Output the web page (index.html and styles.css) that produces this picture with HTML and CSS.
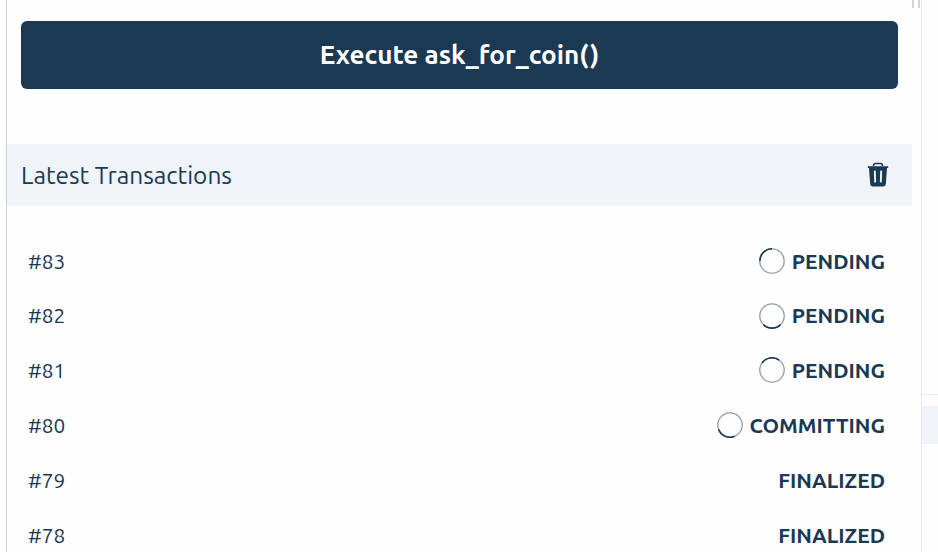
FILE: index.html
```html
<!DOCTYPE html>
<html lang="en">
<head>
<meta charset="utf-8">
<title>Transactions</title>
<link rel="stylesheet" href="styles.css">
</head>
<body>
<div class="layout">
  <main class="panel">
    <button class="execute"><span>Execute ask_for_coin()</span></button>
    <header class="section-header">
      <h2>Latest Transactions</h2>
      <svg class="trash" viewBox="0 0 22 26" aria-label="Clear">
        <path d="M6.500 5V4.700Q6.500 2.500 8.700 2.500h4.600Q15.500 2.500 15.500 4.700V5" fill="none" stroke="currentColor" stroke-width="1.600"/>
        <path fill="currentColor" d="M.8 5.300h20.400v1.800h-1.200l-1.100 15.100Q18.700 25.400 16 25.400H6Q3.300 25.400 3.100 22.200L2 7.100H.8z"/>
        <path d="M7.800 9.600l.4 11.800M14.200 9.600l-.4 11.800" fill="none" stroke="#f0f3f8" stroke-width="1.900"/>
      </svg>
    </header>
    <ul class="transactions">
      <li><span class="id">#83</span><svg class="spinner" viewBox="0 0 26 26"><circle cx="13" cy="13" r="12.200"/><path d="M.8 13A12.200 12.200 0 0 1 13 .8"/></svg><strong>PENDING</strong></li>
      <li><span class="id">#82</span><svg class="spinner low" viewBox="0 0 26 26"><circle cx="13" cy="13" r="12.200"/><path d="M21.600 21.600A12.200 12.200 0 0 1 4.400 21.600"/></svg><strong>PENDING</strong></li>
      <li><span class="id">#81</span><svg class="spinner" viewBox="0 0 26 26"><circle cx="13" cy="13" r="12.200"/><path d="M3 6A12.200 12.200 0 0 1 20 3"/></svg><strong>PENDING</strong></li>
      <li><span class="id">#80</span><svg class="spinner" viewBox="0 0 26 26"><circle cx="13" cy="13" r="12.200"/><path d="M17.600 24.300A12.200 12.200 0 0 1 1.700 17.600"/></svg><strong>COMMITTING</strong></li>
      <li><span class="id">#79</span><strong>FINALIZED</strong></li>
      <li><span class="id">#78</span><strong>FINALIZED</strong></li>
    </ul>
  </main>
  <div class="splitter"><i></i><i></i></div>
  <aside class="side"><div class="side-row"></div></aside>
</div>
</body>
</html>
```
FILE: styles.css
```css
* { box-sizing: border-box; }
body {
  margin: 0;
  overflow: hidden;
  background: #fefefe;
  color: #1b3952;
  font-family: Ubuntu, "Noto Sans", sans-serif;
}
.layout {
  display: grid;
  grid-template-columns: 906px 9px 17px;
  height: 552px;
  padding-left: 6px;
}
.panel {
  height: 552px;
  overflow: hidden;
  border-left: 1px solid #c8d1e2;
}
.execute {
  display: flex;
  align-items: center;
  justify-content: center;
  width: 877px;
  height: 68px;
  margin: 21px 0 55px 14px;
  padding: 0;
  border: 0;
  border-radius: 6px;
  background: #1b3952;
  color: #fff;
  font: 700 26.100px/32px Ubuntu, "Noto Sans", sans-serif;
}
.section-header {
  display: flex;
  align-items: center;
  justify-content: space-between;
  height: 62px;
  padding: 0 23.500px 0 14px;
  background: #f0f3f8;
}
.section-header h2 {
  margin: 0;
  font-size: 24.400px;
  font-weight: 400;
  line-height: 32px;
}
.trash {
  width: 22px;
  height: 26px;
  margin-top: -2px;
}
.transactions {
  margin: 0;
  padding: 29px 27px 0 21px;
  list-style: none;
}
.transactions li {
  display: flex;
  align-items: center;
  height: 55px;
  padding-bottom: 1px;
  font-size: 20.800px;
  line-height: 26px;
}
.transactions li:first-child {
  height: 54px;
  padding-bottom: 0;
}
.transactions strong {
  margin-bottom: 2px;
  font-size: 21px;
}
.id { margin-right: auto; }
.spinner {
  width: 26px;
  height: 26px;
  margin: -2px 7px 0 0;
  fill: none;
  stroke: #8e9ba9;
  stroke-width: 1.300;
}
.spinner.low { margin-top: 0; }
.spinner path {
  stroke: #1b3952;
  stroke-width: 1.600;
}
.splitter {
  display: flex;
  justify-content: space-between;
  padding-right: 1px;
}
.splitter i {
  width: 2px;
  height: 8px;
  background: #d4d4d4;
}
.side {
  padding-top: 394px;
  border-left: 1px solid #e9eaec;
}
.side-row {
  height: 50px;
  border-top: 1px solid #e9eaec;
  background: linear-gradient(#fefefe 11px, #f0f3f8 11px);
}
```
